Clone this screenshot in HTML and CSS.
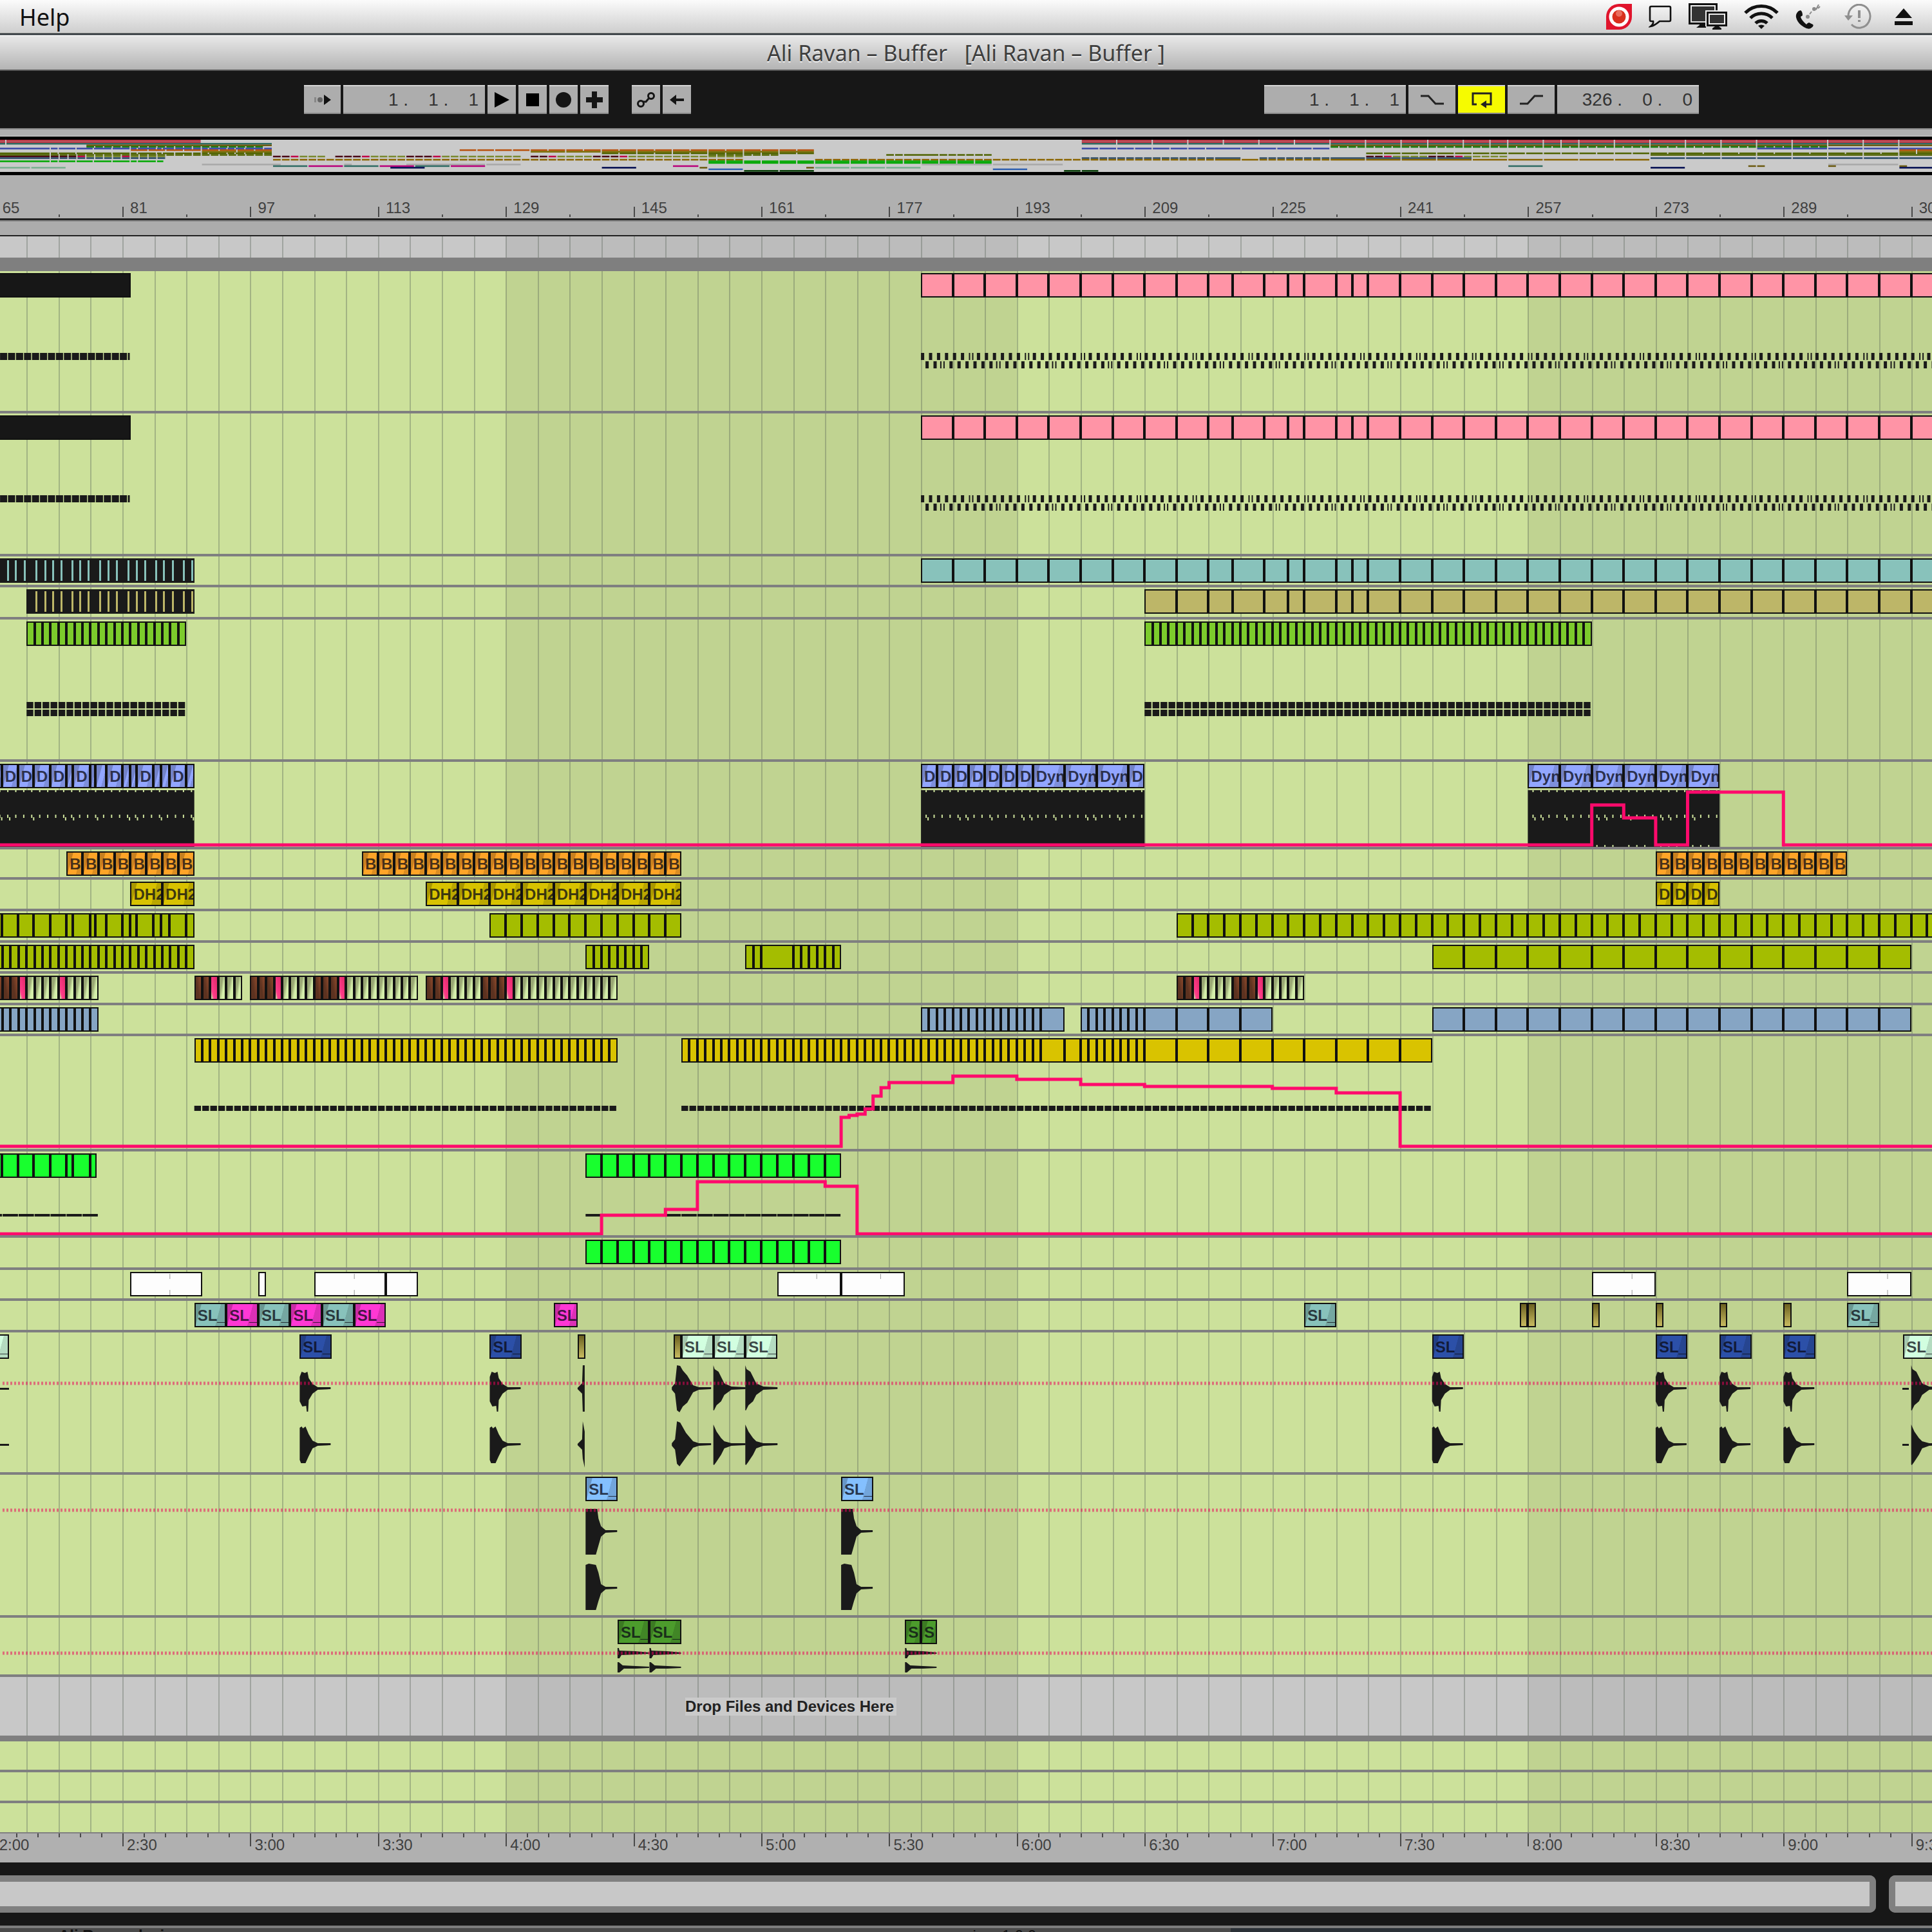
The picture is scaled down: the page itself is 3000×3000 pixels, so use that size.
FILE: index.html
```html
<!DOCTYPE html>
<html lang="en">
<head>
<meta charset="utf-8">
<title>Ali Ravan – Buffer</title>
<link rel="stylesheet" href="styles.css">
</head>
<body>
<header class="menubar">
  <a class="menu-item" href="#help">Help</a>
  <div class="status-icons">
    <svg width="40" height="40" viewBox="0 0 40 40"><path d="M0 40V20A20 20 0 0 1 20 0H40V20A20 20 0 0 1 20 40Z" fill="#e0142c"/><circle cx="20" cy="20" r="15.500" fill="#fff"/><circle cx="20" cy="20" r="10.500" fill="#d9301e"/><circle cx="20" cy="15" r="5" fill="#f4998c" opacity=".6"/></svg>
    <svg width="36" height="36" viewBox="0 0 36 36" fill="none" stroke="#111" stroke-width="2.600"><path d="M4 2H32Q34 2 34 4V23Q34 25 32 25H17Q9 32 3 33Q8 29 7 25H4Q2 25 2 23V4Q2 2 4 2Z"/></svg>
    <svg width="60" height="42" viewBox="0 0 60 42"><path d="M1.500 1.500H43.500V31.500H1.500Z" fill="none" stroke="#111" stroke-width="3"/><path d="M5 5H40V28H5Z" fill="#333"/><path d="M12 38L17 34V32H27V38Z" fill="#111"/><path d="M26 11H60V36H26Z" fill="#eee"/><path d="M29.500 14.500H58.500V34.500H29.500Z" fill="#eee" stroke="#111" stroke-width="3"/><path d="M33 18H55V31H33Z" fill="#333"/><path d="M37 41V39L41 36H47L51 39V41Z" fill="#111"/></svg>
    <svg width="54" height="40" viewBox="0 0 54 40" fill="none" stroke="#111" stroke-width="5"><path d="M2 14A35 35 0 0 1 52 14"/><path d="M10 22A24 24 0 0 1 44 22"/><path d="M18 30A13 13 0 0 1 36 30"/><path d="M27 39L22 34Q27 31 32 34Z" fill="#111" stroke="none"/></svg>
    <svg width="40" height="38" viewBox="0 0 40 38"><path d="M5 10Q0 14 1 20Q3 29 13 35Q21 40 25 36Q29 33 27 31L21 28Q18 29 17 31Q9 24 8 19L11 17Q11 11 8 9Z" fill="#111"/><g fill="#8a8a8a"><circle cx="19" cy="19" r="3"/><circle cx="29" cy="7" r="3"/></g><path d="M22 15L25 11M32 8L36 0M35 6L38 3" stroke="#8a8a8a" stroke-width="2"/></svg>
    <svg class="spaced" width="42" height="40" viewBox="0 0 42 40" fill="none" stroke="#8f8f8f" stroke-width="3"><path d="M6 20A17 18 0 1 1 11 32"/><path d="M0 18H13L6 26Z" fill="#8f8f8f" stroke="none"/><path d="M23 10V22M23 25V28" stroke-width="4"/></svg>
    <svg class="spaced" width="28" height="26" viewBox="0 0 28 26" fill="#111"><path d="M14 0L27 15H1ZM0 20H28V26H0Z"/></svg>
  </div>
</header>
<div class="titlebar"><h1>Ali Ravan – Buffer&nbsp;&nbsp; [Ali Ravan – Buffer ]</h1></div>

<div class="toolbar">
  <div class="group">
    <button class="tool wide" aria-label="Follow"><svg width="30" height="24" viewBox="0 0 30 24"><path d="M2 8h3v8H2z" fill="#888"/><circle cx="11" cy="12" r="4" fill="#666"/><path d="M17 4L28 12L17 20Z" fill="#111"/></svg></button>
    <input class="readout" aria-label="Position" value="1 .    1 .    1">
    <button class="tool" aria-label="Play"><svg width="26" height="26" viewBox="0 0 26 26"><path d="M2 1L25 13L2 25Z"/></svg></button>
    <button class="tool" aria-label="Stop"><svg width="22" height="22" viewBox="0 0 22 22"><path d="M1 1H21V21H1Z"/></svg></button>
    <button class="tool" aria-label="Record"><svg width="24" height="24" viewBox="0 0 24 24"><circle cx="12" cy="12" r="12" fill="#151515"/></svg></button>
    <button class="tool" aria-label="Overdub"><svg width="28" height="28" viewBox="0 0 28 28"><path d="M10 1H18V10H27V18H18V27H10V18H1V10H10Z" fill="#151515"/></svg></button>
    <button class="tool gap" aria-label="Draw links"><svg width="30" height="26" viewBox="0 0 30 26" fill="none" stroke="#151515" stroke-width="3"><circle cx="7" cy="19" r="4.500"/><circle cx="23" cy="7" r="4.500"/><path d="M10 16H15L20 10"/></svg></button>
    <button class="tool" aria-label="Back to arrangement"><svg width="26" height="20" viewBox="0 0 26 20"><path d="M2 10L12 2V8H24V12H12V18Z" fill="#151515"/></svg></button>
  </div>
  <div class="group">
    <input class="readout" aria-label="Loop start" value="1 .    1 .    1">
    <button class="tool big" aria-label="Punch in"><svg width="38" height="18" viewBox="0 0 38 18" fill="none" stroke="#222" stroke-width="3"><path d="M1 3H13L24 15H37"/></svg></button>
    <button class="tool big on" aria-label="Loop"><svg width="34" height="26" viewBox="0 0 34 26" fill="none" stroke="#222" stroke-width="3"><path d="M9 20H3V3H31V20H24"/><path d="M15 20L24 14V26Z" fill="#222" stroke="none"/></svg></button>
    <button class="tool big" aria-label="Punch out"><svg width="38" height="18" viewBox="0 0 38 18" fill="none" stroke="#222" stroke-width="3"><path d="M1 15H13L24 3H37"/></svg></button>
    <input class="readout" aria-label="Loop length" value="326 .    0 .    0">
  </div>
</div>

<main class="arrangement">
  <div class="strip"></div>
  <div class="overview"></div>
  <div class="ruler bars"></div>
  <div class="strip loop-strip"></div>
  <div class="lane scrub"></div>
  <div class="divider tall"></div>
  <div class="tracks"></div>
  <div class="lane drop"><p>Drop Files and Devices Here</p></div>
  <div class="divider"></div>
  <div class="returns"></div>
  <div class="ruler time"></div>
</main>

<footer class="bottom">
  <div class="panels"><div class="panel main-panel"></div><div class="panel side-panel"></div></div>
  <div class="behind"><span>Ali Ravan desi</span><span class="version">version&nbsp; 1.0.0</span></div>
</footer>
<script src="script.js"></script>
</body>
</html>
```
FILE: styles.css
```css
* { box-sizing: border-box; }
html { background: #171717; }
body {
  margin: 0;
  min-height: 100vh;
  display: flex;
  flex-direction: column;
  overflow: hidden;
  background: #171717;
  font-family: "Liberation Sans", Arial, sans-serif;
  font-size: 24px;
  color: #3c3c3c;
}
svg { display: block; }

.menubar {
  height: 56px;
  padding: 0 30px 4px;
  display: flex;
  align-items: center;
  justify-content: space-between;
  background: linear-gradient(#fbfbfb, #cfcfcf 50px, #d2d2cc 51px, #30373c 52px, #30373c 54px, #fff 55px);
}
.menu-item {
  font: 36px "Noto Sans", sans-serif;
  color: #111;
  text-decoration: none;
}
.status-icons { display: flex; align-items: center; gap: 26px; }
.status-icons .spaced { margin-left: 10px; }

.titlebar {
  height: 54px;
  display: flex;
  align-items: center;
  justify-content: center;
  background: linear-gradient(#e8e8e8, #b4b4b4);
  border-bottom: 2px solid #5a5a5a;
}
.titlebar h1 {
  margin: 0;
  font: 34px "Noto Sans", sans-serif;
  color: #3f3f3f;
  text-shadow: 0 2px 0 #eee;
}

.toolbar {
  display: flex;
  justify-content: space-between;
  padding: 22px 362px 22px 472px;
}
.group { display: flex; gap: 4px; }
.tool, .readout {
  height: 45px;
  padding: 0;
  border: 0;
  border-top: 2px solid #d6d6d6;
  border-bottom: 2px solid #8a8a8a;
  border-radius: 0;
  background: #adadad;
}
.tool {
  width: 45px;
  display: flex;
  align-items: center;
  justify-content: center;
}
.tool:not(.wide):not(.big) { width: 44px; }
.tool.wide { width: 57px; }
.tool.big { width: 73px; }
.tool.gap { margin-left: 32px; }
.tool.on { background: #f6fb00; }
.readout {
  width: 220px;
  padding-right: 10px;
  font: 28px "Liberation Sans", Arial, sans-serif;
  color: #333;
  text-align: right;
}

.arrangement { display: flex; flex-direction: column; }
.strip { height: 13px; background: #b0b0b0; border-top: 2px solid #888; border-bottom: 1px solid #ddd; }
.loop-strip { height: 25px; background: #acacac; border-bottom: 2px solid #222; }
.overview {
  height: 60px;
  background: #cacaca;
  border-top: 5px solid #000;
  border-bottom: 5px solid #000;
}
.overview svg { width: 100%; height: 50px; }
.overview rect { fill: var(--mini); }

.ruler { position: relative; overflow: hidden; background: #b0b0b0; }
.ruler.bars { height: 70px; border-bottom: 3px solid #222; }
.ruler.time { height: 47px; border-top: 2px solid #808080; }
.ruler svg { position: absolute; inset: 0; width: 100%; height: 100%; }
.ruler span { position: absolute; color: #404040; line-height: 24px; }
.ruler.bars span { top: 39px; padding-left: 12px; }
.ruler.time span { top: 6px; padding-left: 7px; }

.lane {
  position: relative;
  overflow: hidden;
  background: #cce19b;
  border-bottom: 4px solid #7f7f80;
}
.lane svg { position: absolute; top: 0; left: 0; width: 100%; }
.lane .grid { height: 100%; }
.grid .band { fill: rgba(0, 0, 0, .06); }
.grid .lines { fill: rgba(90, 100, 90, .36); }
.returns .lane { height: 48px; }
.returns .lane:last-child { height: 45px; border-bottom: 0; }
.scrub { height: 33px; background: #c8c8c8; border: 0; }
.drop {
  height: 91px;
  background: #c8c8c8;
  border: 0;
  display: flex;
  align-items: center;
  padding-left: 1064px;
}
.drop p {
  position: relative;
  margin: 0;
  padding: 0 4px 0 0;
  background: #cacaca;
  font-weight: bold;
  line-height: 28px;
  color: #222;
}
.divider { height: 9px; background: #7f7f7f; }
.divider.tall { height: 21px; }

.clip {
  position: absolute;
  top: 3px;
  height: 38px;
  overflow: hidden;
  border: 2px solid #111;
  background: var(--clip);
  color: rgba(10, 10, 20, .76);
  font-size: 24px;
  font-weight: bold;
  line-height: 36px;
  white-space: nowrap;
  text-indent: 3px;
}
.clip.faded { background: linear-gradient(105deg, rgba(0, 0, 0, .22) 8px, transparent 9px, transparent 72%, rgba(0, 0, 0, .14) 73%) var(--clip); }
.ink { fill: #1a1a1a; }
.specks { fill: #cce19b; }
.marks { fill: #999; }
.automation { fill: none; stroke: #ff0a6c; stroke-width: 5; vector-effect: non-scaling-stroke; }
.dotted { fill: none; stroke: rgba(235, 0, 90, .52); stroke-width: 5; stroke-dasharray: 3 3; vector-effect: non-scaling-stroke; }

.black { --clip: #171717; --mini: #b83a48; }
.pink { --clip: #ff94a6; --mini: #b83a48; }
.teal { --clip: #88c2bb; --mini: #2f6b63; }
.khaki { --clip: #bdb668; --mini: #6b5a10; }
.green { --clip: #7ccb2c; --mini: #1a7a10; }
.blue { --clip: #92a6ff; --mini: #3848a8; }
.orange { --clip: #ffa428; --mini: #b8500c; }
.mustard { --clip: #d8c200; --mini: #7a6a00; }
.olive { --clip: #a4bd00; --mini: #4f6300; }
.brown { --clip: linear-gradient(80deg, #5c3220 40%, #8f4a2c); --mini: #4a0a18; }
.rose { --clip: linear-gradient(75deg, #cbe0a0 5%, #ff3d8b 25%, #e02868); --mini: #c00848; }
.pale { --clip: linear-gradient(100deg, #98a673 35%, #d4eeaa 65%); --mini: #7a8a30; }
.steel { --clip: #86a5c4; --mini: #2b4a68; }
.gold { --clip: #d9c300; --mini: #8a6500; }
.lime { --clip: #18ff2e; --mini: #00a800; }
.white { --clip: #fdfdfd; --mini: #a8a8a8; }
.magenta { --clip: #ff38d4; --mini: #b8007a; }
.navy { --clip: #2c50a8; --mini: #000a50; }
.mint { --clip: #d2ffe0; --mini: #7ab090; }
.sky { --clip: #84c0ff; --mini: #3060b0; }
.forest { --clip: #4c9c2c; --mini: #003800; }
.brass { --clip: linear-gradient(#6b6020, #c8bb60); --mini: #6b5a10; }
.teeth { fill: var(--clip); }

.bottom { flex: 1; display: flex; flex-direction: column; padding-top: 20px; }
.panels { display: flex; gap: 20px; height: 58px; }
.panel { background: #c8c8c8; border: 10px solid #808080; }
.main-panel { flex: 1; border-left: 0; border-radius: 0 10px 10px 0; }
.side-panel { width: 67px; border-right: 0; border-radius: 10px 0 0 10px; }
.behind {
  height: 10px;
  margin-top: 20px;
  padding-left: 91px;
  display: flex;
  gap: 1210px;
  overflow: hidden;
  border-top: 4px solid #7c7c7c;
  background: linear-gradient(90deg, #4a4a4a 1911px, #2a3036 1911px);
  color: #111;
  font-weight: bold;
  line-height: 24px;
}
.behind .version { font-weight: normal; }
```
FILE: script.js
```js
// Time axis: bar number at the left edge and number of bars on screen.
const START = 65.67, SPAN = 241.935, W = 3000;
const X = bar => (bar - START) / SPAN * W;
const pct = v => (v / W * 100).toFixed(4) + '%';

const range = (a, b, step = 1) => {
  const out = [];
  for (let v = a; v <= b; v += step) out.push(v);
  return out;
};
// A run is a list of boundaries: each pair of neighbours is one clip.
const run = (kind, bars, label = '', faded = false) => ({ kind, bars, label, faded });
const clip = (kind, from, to, label = '', faded = true) => run(kind, [from, to], label, faded);

const song = [181, 185, 189, 193, 197, 201, 205, 209, 213, 217, 220, 224, 227, 229, 233, 235, 237, ...range(241, 313, 4)];
const songB = song.slice(7);
const tight = [65, 65.9, 67.9, 69.85, 71.95, 74, 74.8, 76.95, 77.6, 79, 81, 82, 82.8, 84.9, 85.8, 86.9, 89, 90];
const pattern = (from, text) => [...text].map((c, i) =>
  run({ b: 'brown', m: 'rose', w: 'pale' }[c], [from + i, from + i + 1]));

// Short strokes at given pixel positions.
const bars = (list, y, h) => list.map(([x, w]) => `M${x.toFixed(1)} ${y}h${w}v${h}h${-w}z`).join('');
const steps = (from, to, y, h, gap, step = 1) =>
  bars(range(from, to - step, step).map(b => [X(b), 12.4 * step - gap]), y, h);
const ink = d => `<path class="ink" d="${d}"/>`;
const auto = d => `<path class="automation" d="${d}"/>`;
const dots = y => `<path class="dotted" d="M4 ${y}H3000"/>`;
const poly = (x, y, pts) => 'M' + pts.map(([a, b]) => `${(x + a).toFixed(1)} ${y + b}`).join('L') + 'Z';

const WAVE = {
  kick: [[[0, -18], [3, -26], [8, -24], [12, -26], [14, -16], [20, -7], [28, -2], [48, -2], [48, 1], [28, 2], [20, 8], [14, 18], [13, 36], [11, 36], [10, 27], [4, 28], [0, 20]],
         [[0, -26], [3, -28], [5, -25], [9, -28], [14, -16], [20, -6], [28, -2], [48, -2], [48, 1], [28, 2], [20, 6], [14, 18], [9, 29], [2, 29], [0, 24]]],
  hit: [[[0, -36], [2, -30], [8, -26], [12, -18], [17, -8], [28, -3], [50, -2], [50, 1], [28, 2], [17, 10], [12, 20], [5, 26], [1, 34], [0, 34]],
        [[0, -31], [5, -20], [12, -10], [17, -5], [28, -2], [50, -2], [50, 1], [28, 2], [17, 6], [12, 16], [4, 28], [1, 32], [0, 31]]],
  swell: [[[0, -2], [5, -8], [8, -36], [13, -35], [17, -28], [24, -20], [33, -5], [42, -2], [61, -2], [61, 1], [42, 2], [33, 6], [24, 22], [17, 28], [12, 37], [8, 34], [5, 8], [0, 2]],
          [[0, -2], [5, -8], [8, -36], [13, -34], [22, -18], [33, -5], [42, -2], [61, -2], [61, 1], [42, 2], [33, 5], [22, 20], [12, 34], [8, 30], [5, 8], [0, 2]]],
  rise: [[[0, -1], [7, -8], [8, -36], [11, -36], [11, 36], [8, 36], [7, 8], [0, 1]],
         [[0, -1], [7, -8], [8, -36], [11, -20], [11, 36], [8, 22], [7, 8], [0, 1]]],
  slab: [[[0, -35], [18, -35], [20, -20], [24, -8], [31, -2], [49, -2], [49, 1], [31, 2], [24, 8], [20, 22], [16, 36], [0, 36]],
         [[0, -36], [5, -38], [16, -36], [20, -24], [24, -6], [31, -2], [49, -2], [49, 1], [31, 2], [24, 8], [20, 20], [16, 34], [0, 34]]],
  tick: [[[0, -8], [2, -8], [3, -4], [28, -3], [49, -1], [49, 1], [28, 2], [6, 3], [3, 8], [0, 8]],
         [[0, -8], [2, -8], [8, -3], [28, -2], [49, -1], [49, 1], [28, 2], [10, 2], [3, 8], [0, 8]]]
};
const wave = (name, bar, y1, y2) => ink(poly(X(bar), y1, WAVE[name][0]) + poly(X(bar), y2, WAVE[name][1]));

// Alternating notes of the lead part on two rows.
const lead = (() => {
  const top = [], low = [];
  for (let i = 0; i < 127; i++) {
    const x = X(181 + i);
    i % 7 === 6 ? top.push([x, 2], [x + 5, 2]) : top.push([x, 5]);
    i % 7 === 2 ? low.push([x + 5, 2], [x + 10, 2]) : low.push([x + 7, 5]);
  }
  return ink(bars(top, 127, 11) + bars(low, 140, 11) + bars(range(66, 81).map(b => [X(b) - 4, 11]), 127, 11) + bars([[X(82) - 4, 3]], 127, 11));
})();

const slabNotes = (from, to, foot) => {
  const a = X(from), b = X(to);
  const ticks = range(Math.ceil(from), to - 1);
  return ink(`M${a} 44H${b}V134H${a}Z`) + `<path class="specks" d="${
    bars(ticks.map(t => [X(t) + 7, 2]), 44, 3) +
    bars(ticks.map(t => [X(t) + 7, 2]), 82, 5) +
    bars(ticks.filter(t => t % 4 === 1 || t % 8 === 2).map(t => [X(t) + 10, 2]), 86, 5) +
    (foot ? bars(ticks.filter(t => t >= foot && t % 4 !== 0).map(t => [X(t) + 7, 2]), 129, 3) : '')}"/>`;
};
const teeth = [11, 23, 37, 55, 69, 81, 94, 111, 123, 136, 154, 167, 180, 198, 211, 224, 241, 253, 267, 284, 297];

const sl = (kind, from, to) => clip(kind, from, to, 'SL_');
const tracks = [
  { h: 221, runs: [clip('black', 60, 82, '', false), run('pink', song)], art: lead },
  { h: 222, runs: [clip('black', 60, 82, '', false), run('pink', song)], art: lead },
  { h: 48, runs: [run('teal', song), run('teal', [60, 90])], teeth },
  { h: 50, runs: [run('khaki', songB), run('khaki', [69, 90])], teeth: teeth.slice(3) },
  { h: 221, runs: [run('green', range(69, 89)), run('green', range(209, 265))],
    art: ink([128, 140].map(y => steps(69, 89, y, 10, 2) + steps(209, 265, y, 10, 2)).join('')) },
  { h: 136, runs: [run('blue', tight, 'D', true),
      run('blue', [181, 183, 185, 187, 189, 191, 193, 195], 'D', true),
      run('blue', [195, 199, 203, 207], 'Dyn', true), clip('blue', 207, 209, 'D'),
      run('blue', range(257, 281, 4), 'Dyn', true)],
    art: slabNotes(65, 90) + slabNotes(181, 209) + slabNotes(257, 281, 265) +
      auto(`M0 129H${X(265)}V67H${X(269)}V87H${X(273)}V129H${X(277)}V47H${X(289)}V129H3000`) },
  { h: 47, runs: [run('orange', range(74, 90, 2), 'B', true), run('orange', range(111, 151, 2), 'B', true), run('orange', range(273, 297, 2), 'B', true)] },
  { h: 49, runs: [run('mustard', range(82, 90, 4), 'DH2', true), run('mustard', range(119, 151, 4), 'DH2', true), run('mustard', range(273, 281, 2), 'D', true)] },
  { h: 49, runs: [run('olive', tight), run('olive', range(127, 151, 2)), run('olive', range(213, 309, 2))] },
  { h: 48, runs: [run('olive', range(65, 90)), run('olive', range(139, 147)), run('olive', [159, 160, 161, ...range(165, 171)]), run('olive', range(245, 305, 4))] },
  { h: 49, runs: [...pattern(65, 'bbbmwwwwmwwww'), ...pattern(90, 'bbmwww'), ...pattern(97, 'bbbmwwwwbbbmwwwwwwwww'),
      ...pattern(119, 'bbmwwwwbbbmwwwwwwwwwwwww'), ...pattern(213, 'bbmwwwwbbbmwwwww')] },
  { h: 48, runs: [run('steel', range(65, 78)), run('steel', [...range(181, 196), 199]), run('steel', [...range(201, 209), 213, 217, 221, 225]), run('steel', range(245, 305, 4))] },
  { h: 179, runs: [run('gold', range(90, 143)), run('gold', [...range(151, 196), 199, ...range(201, 209), ...range(213, 245, 4)])],
    art: ink(steps(90, 143, 108, 8, 2) + steps(151, 245, 108, 8, 2)) +
      auto(`M0 171H${X(171)}V126H${X(172)}V123H${X(173)}V121H${X(174)}V113H${X(175)}V93H${X(176)}V80H${X(177)}V72H${X(185)}V62H${X(193)}V67H${X(201)}V75H${X(209)}V78H${X(225)}V81H${X(233)}V88H${X(241)}V171H3000`) },
  { h: 134, runs: [run('lime', [65, 65.9, 67.9, 69.85, 71.95, 74, 74.8, 76.95, 77.8]), run('lime', range(139, 171, 2))],
    art: ink(steps(64, 78, 97, 4, 1, 2) + steps(139, 171, 97, 4, 1, 2)) +
      auto(`M0 128H${X(141)}V99H${X(149)}V90H${X(153)}V47H${X(169)}V54H${X(173)}V128H3000`) },
  { h: 50, runs: [run('lime', range(139, 171, 2))] },
  { h: 48, runs: [run('white', [82, 91]), run('white', [98, 99]), run('white', [105, 114, 118]), run('white', [163, 171, 179]), run('white', [265, 273]), run('white', [297, 305])],
    over: `<path class="marks" d="${bars([86.9, 110, 167.9, 175.9, 270, 302].map(b => [X(b), 1]), 6, 8) + bars([86.9, 110, 270, 302].map(b => [X(b), 1]), 31, 8)}"/>` },
  { h: 49, runs: [sl('teal', 90, 94), sl('magenta', 94, 98), sl('teal', 98, 102), sl('magenta', 102, 106), sl('teal', 106, 110), sl('magenta', 110, 114),
      clip('magenta', 135, 138, 'SL'), sl('teal', 229, 233), run('brass', [256, 257, 258]), run('brass', [265, 266]), run('brass', [273, 274]),
      run('brass', [281, 282]), run('brass', [289, 290]), sl('teal', 297, 301)] },
  { h: 221, runs: [clip('mint', 62.8, 66.8, 'SL_'), sl('navy', 103.2, 107.2), sl('navy', 127, 131), run('brass', [138, 139]), run('brass', [150, 151]),
      sl('mint', 151, 155), sl('mint', 155, 159), sl('mint', 159, 163), sl('navy', 245, 249), sl('navy', 273, 277), sl('navy', 281, 285), sl('navy', 289, 293), sl('mint', 304, 308)],
    art: ink('M0 86H14V89H0ZM0 173H14V176H0ZM2954 86H2964V89H2954ZM2954 173H2964V176H2954Z') +
      [103.2, 127, 245, 273, 281, 289].map(b => wave('kick', b, 87, 174)).join('') +
      [155, 159, 305].map(b => wave('hit', b, 87, 174)).join('') + wave('rise', 138, 87, 174) + wave('swell', 149.8, 87, 174) + dots(79) },
  { h: 222, runs: [sl('sky', 139, 143), sl('sky', 171, 175)],
    art: wave('slab', 139, 88, 176) + wave('slab', 171, 88, 176) + dots(55) },
  { h: 92, runs: [sl('forest', 143, 147), sl('forest', 147, 151), clip('forest', 179, 181, 'S'), clip('forest', 181, 183, 'S')],
    art: [143, 147, 179].map(b => wave('tick', b, 55, 77)).join('') + dots(55) }
];

const svg = (cls, h, body, style = '') =>
  `<svg class="${cls}" viewBox="0 0 ${W} ${h}" preserveAspectRatio="none"${style}>${body}</svg>`;

const grid = svg('grid', 1,
  `<path class="band" d="M${X(129)} 0H${X(193)}V1H${X(129)}ZM${X(257)} 0H${W}V1H${X(257)}Z"/>` +
  `<path class="lines" d="${range(69, 305, 4).map(b => `M${Math.round(X(b))} 0h2v1h-2z`).join('')}"/>`);

const clipsOf = r => r.bars.slice(1).map((end, i) => ({ kind: r.kind, from: r.bars[i], to: end, label: r.label, faded: r.faded }));

const trackHtml = t => {
  const clips = t.runs.flatMap(clipsOf).filter(c => X(c.from) < W).map(c => {
    const w = X(c.to) - X(c.from);
    const text = w > 22 ? c.label : '';
    return `<div class="clip ${c.kind}${c.faded ? ' faded' : ''}" style="left:${pct(X(c.from))};width:${pct(w)}">${text}</div>`;
  }).join('');
  const size = ` style="height:${t.h}px"`;
  let over = t.over || '';
  if (t.teeth) {
    const from = t.teeth.length === teeth.length ? 0 : X(69);
    over = `<path class="ink" d="M${from} 3H${X(90)}V41H${from}Z"/><path class="teeth ${t.runs[0].kind}" d="${bars(t.teeth.map(x => [x, 3]), 6, 32)}"/>`;
  }
  return `<section class="lane"${size}>${grid}${svg('art', t.h, t.art || '', size)}${clips}${over ? svg('over', t.h, over, size) : ''}</section>`;
};

document.querySelector('.tracks').innerHTML = tracks.map(trackHtml).join('');
document.querySelector('.returns').innerHTML = `<section class="lane">${grid}</section>`.repeat(3);
document.querySelector('.scrub').innerHTML = grid;
document.querySelector('.drop').insertAdjacentHTML('afterbegin', grid);

// The overview shows the same clips at a slightly wider scale.
const OX = bar => 424 + (bar - 90) * 13.8;
const rows = tracks.map((t, i) => t.runs.flatMap(r => {
  const list = clipsOf(r);
  if (list.length && list[0].from < 66) list.unshift({ ...list[0], from: 57, to: list[0].from });
  return list;
}).map(c => `<rect class="${c.kind}" x="${OX(c.from).toFixed(1)}" y="${(i * 2.48).toFixed(2)}" width="${Math.max(2, OX(c.to) - OX(c.from) - 2).toFixed(1)}" height="2.5"/>`).join('')).join('');
document.querySelector('.overview').innerHTML = svg('', 50, rows);

const labelled = range(65, 305, 16);
const barTicks = labelled.map(b => `M${Math.round(X(b))} 49h2v16h-2zM${Math.round(X(b + 8))} 61h2v4h-2z`).join('');
document.querySelector('.ruler.bars').innerHTML = svg('', 67, `<path fill="#4a4a4a" d="${barTicks}"/>`) +
  labelled.map(b => `<span style="left:${pct(X(b))}">${b}</span>`).join('');

const timeTicks = labelled.map(b => `M${Math.round(X(b))} 0h2v20h-2z` +
  [1, 2, 3, 4, 5].map(k => `M${Math.round(X(b + k * 16 / 6))} 0h2v6h-2z`).join('')).join('');
document.querySelector('.ruler.time').innerHTML = svg('', 45, `<path fill="#4a4a4a" d="${timeTicks}"/>`) +
  labelled.map((b, i) => `<span style="left:${pct(X(b))}">${2 + (i >> 1)}:${i % 2 ? '30' : '00'}</span>`).join('');
```
